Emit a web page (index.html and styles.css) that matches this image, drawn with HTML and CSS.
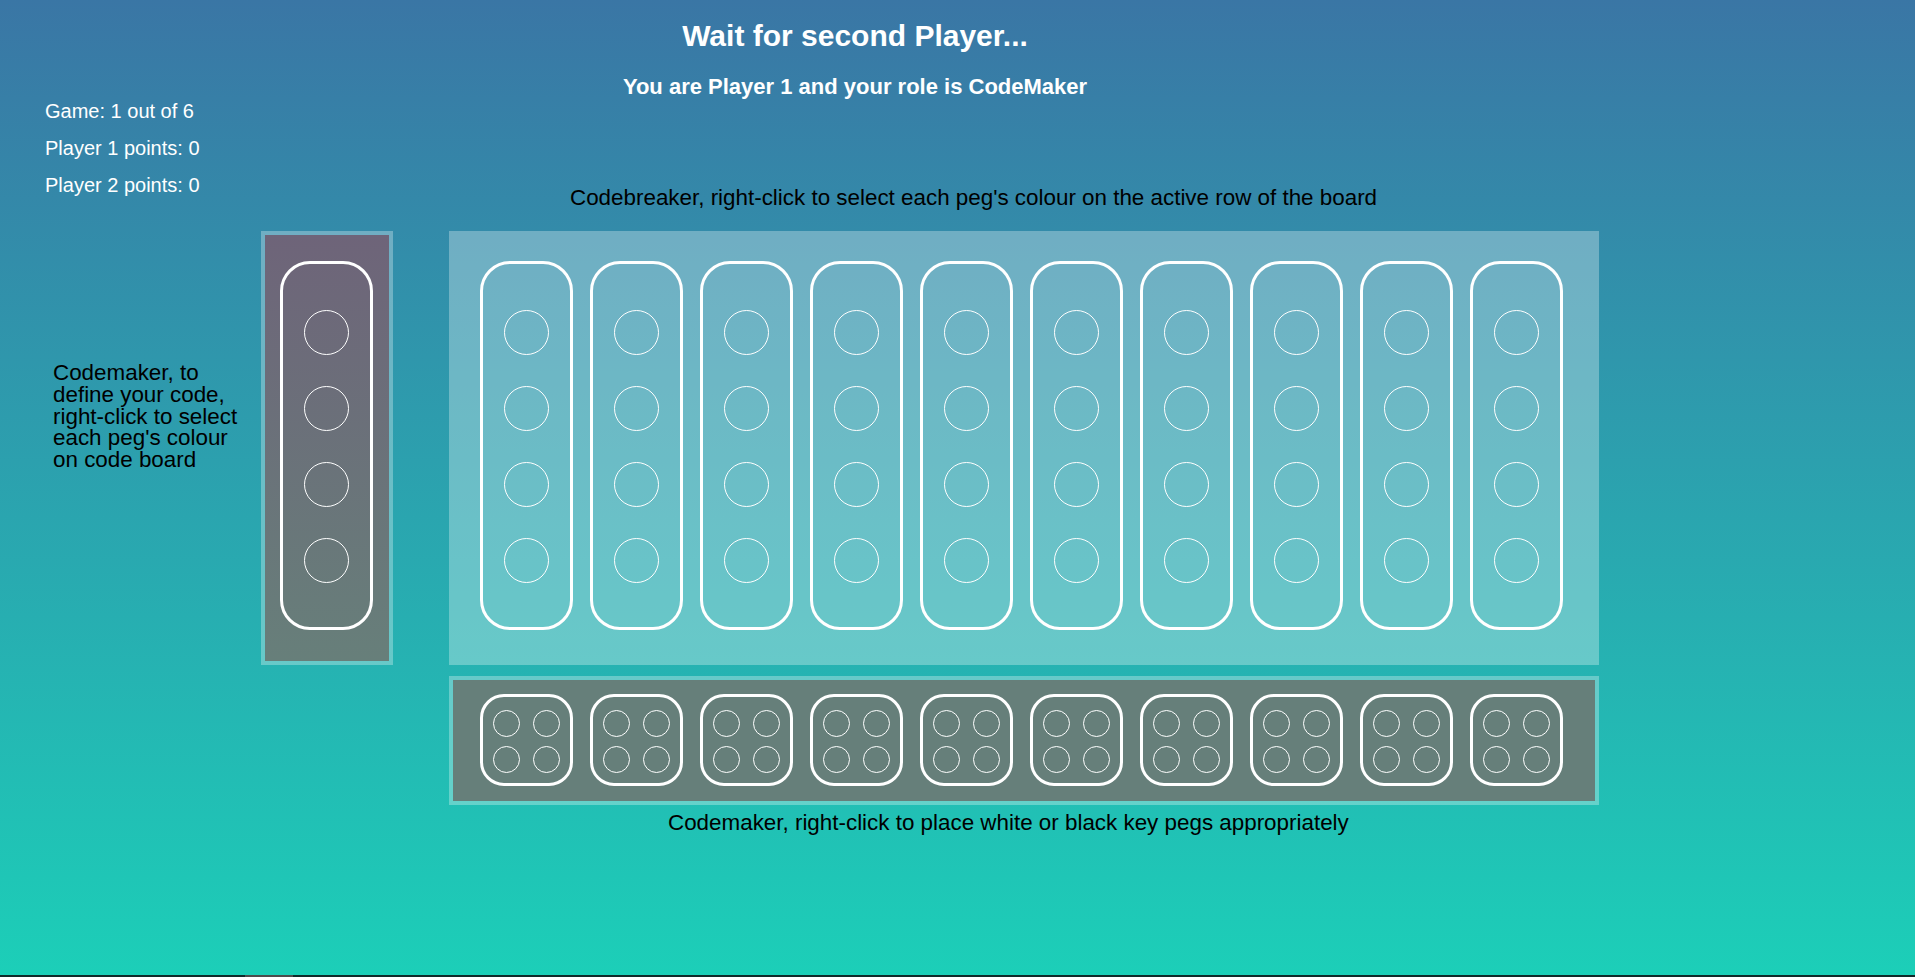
FILE: index.html
```html
<!DOCTYPE html>
<html lang="en">
<head>
<meta charset="utf-8">
<title>Mastermind</title>
<link rel="stylesheet" href="styles.css">
</head>
<body>
<div class="page">
  <header class="header">
    <h1 class="title">Wait for second Player...</h1>
    <h2 class="subtitle">You are Player 1 and your role is CodeMaker</h2>
  </header>

  <main class="game">
    <div class="stats">
      <p>Game: 1 out of 6</p>
      <p>Player 1 points: 0</p>
      <p>Player 2 points: 0</p>
    </div>

    <p class="label label-top">Codebreaker, right-click to select each peg's colour on the active row of the board</p>

    <p class="note">Codemaker, to define your code, right-click to select each peg's colour on code board</p>

    <div class="codeboard">
      <div class="pill"><span class="peg"></span><span class="peg"></span><span class="peg"></span><span class="peg"></span></div>
    </div>

    <div class="board">
      <div class="pill"><span class="peg"></span><span class="peg"></span><span class="peg"></span><span class="peg"></span></div>
      <div class="pill"><span class="peg"></span><span class="peg"></span><span class="peg"></span><span class="peg"></span></div>
      <div class="pill"><span class="peg"></span><span class="peg"></span><span class="peg"></span><span class="peg"></span></div>
      <div class="pill"><span class="peg"></span><span class="peg"></span><span class="peg"></span><span class="peg"></span></div>
      <div class="pill"><span class="peg"></span><span class="peg"></span><span class="peg"></span><span class="peg"></span></div>
      <div class="pill"><span class="peg"></span><span class="peg"></span><span class="peg"></span><span class="peg"></span></div>
      <div class="pill"><span class="peg"></span><span class="peg"></span><span class="peg"></span><span class="peg"></span></div>
      <div class="pill"><span class="peg"></span><span class="peg"></span><span class="peg"></span><span class="peg"></span></div>
      <div class="pill"><span class="peg"></span><span class="peg"></span><span class="peg"></span><span class="peg"></span></div>
      <div class="pill"><span class="peg"></span><span class="peg"></span><span class="peg"></span><span class="peg"></span></div>
    </div>

    <div class="keyboard">
      <div class="keybox"><span class="kpeg"></span><span class="kpeg"></span><span class="kpeg"></span><span class="kpeg"></span></div>
      <div class="keybox"><span class="kpeg"></span><span class="kpeg"></span><span class="kpeg"></span><span class="kpeg"></span></div>
      <div class="keybox"><span class="kpeg"></span><span class="kpeg"></span><span class="kpeg"></span><span class="kpeg"></span></div>
      <div class="keybox"><span class="kpeg"></span><span class="kpeg"></span><span class="kpeg"></span><span class="kpeg"></span></div>
      <div class="keybox"><span class="kpeg"></span><span class="kpeg"></span><span class="kpeg"></span><span class="kpeg"></span></div>
      <div class="keybox"><span class="kpeg"></span><span class="kpeg"></span><span class="kpeg"></span><span class="kpeg"></span></div>
      <div class="keybox"><span class="kpeg"></span><span class="kpeg"></span><span class="kpeg"></span><span class="kpeg"></span></div>
      <div class="keybox"><span class="kpeg"></span><span class="kpeg"></span><span class="kpeg"></span><span class="kpeg"></span></div>
      <div class="keybox"><span class="kpeg"></span><span class="kpeg"></span><span class="kpeg"></span><span class="kpeg"></span></div>
      <div class="keybox"><span class="kpeg"></span><span class="kpeg"></span><span class="kpeg"></span><span class="kpeg"></span></div>
    </div>

    <p class="label label-bottom">Codemaker, right-click to place white or black key pegs appropriately</p>
  </main>
</div>
<div class="scrollbar"><span class="thumb"></span></div>
</body>
</html>
```

FILE: styles.css
```css
html, body {
  margin: 0;
  padding: 0;
}

body {
  width: 1915px;
  height: 977px;
  overflow: hidden;
  display: flex;
  flex-direction: column;
  font-family: "Liberation Sans", Arial, sans-serif;
  color: #000;
  background: linear-gradient(to bottom, #3a76a5 0%, #1ccfb8 100%);
}

.page {
  flex: 1;
}

.header {
  width: 1710px;
  height: 100px;
  text-align: center;
  color: #fff;
}

.title {
  margin: 0;
  padding-top: 19px;
  font-size: 30px;
  font-weight: bold;
  line-height: 34.5px;
}

.subtitle {
  margin: 20px 0 0;
  font-size: 22px;
  font-weight: bold;
  line-height: 25px;
}

.game {
  display: grid;
  grid-template-columns: 261px 188px 1150px;
  grid-template-rows: 131px auto auto auto;
}

.stats {
  grid-column: 1;
  grid-row: 1;
  padding-left: 45px;
  color: #fff;
  font-size: 20px;
  line-height: 23px;
}

.stats p {
  margin: 0 0 14px;
  white-space: nowrap;
}

.label {
  margin: 0;
  font-size: 22.4px;
  line-height: 25.75px;
  white-space: nowrap;
}

.label-top {
  grid-column: 3;
  grid-row: 1;
  align-self: end;
  padding-left: 121px;
  margin-bottom: 20px;
}

.label-bottom {
  grid-column: 3;
  grid-row: 4;
  padding-left: 219px;
  margin-top: 5px;
}

.note {
  grid-column: 1;
  grid-row: 2;
  margin: 131px 0 0 53px;
  width: 195px;
  font-size: 22.4px;
  line-height: 21.75px;
}

.codeboard {
  grid-column: 2;
  grid-row: 2;
  width: 132px;
  height: 434px;
  box-sizing: border-box;
  padding: 26px 16px 31px 15px;
  border: 4px solid rgba(255, 255, 255, 0.3);
  background: linear-gradient(to bottom, #6e6479 0%, #677f7a 100%) padding-box;
}

.board {
  grid-column: 3;
  grid-row: 2;
  height: 434px;
  box-sizing: border-box;
  padding: 30px 0 0 31px;
  display: flex;
  align-items: flex-start;
  gap: 17px;
  background: rgba(255, 255, 255, 0.3);
}

.pill {
  width: 93px;
  height: 369px;
  box-sizing: border-box;
  border: 3px solid #fff;
  border-radius: 30px;
  display: flex;
  flex-direction: column;
  align-items: center;
  justify-content: center;
  gap: 31px;
  padding-top: 1px;
}

.peg {
  display: block;
  width: 45px;
  height: 45px;
  box-sizing: border-box;
  border: 1px solid #fff;
  border-radius: 50%;
}

.keyboard {
  grid-column: 3;
  grid-row: 3;
  margin-top: 11px;
  height: 129px;
  box-sizing: border-box;
  padding: 14px 0 0 27px;
  border: 4px solid rgba(255, 255, 255, 0.3);
  background: #667f7a padding-box;
  display: flex;
  align-items: flex-start;
  gap: 17px;
}

.keybox {
  width: 93px;
  height: 92px;
  box-sizing: border-box;
  border: 3px solid #fff;
  border-radius: 24px;
  display: grid;
  grid-template-columns: 27px 27px;
  grid-template-rows: 27px 27px;
  column-gap: 13px;
  row-gap: 9px;
  align-content: center;
  justify-content: center;
  padding-top: 3px;
}

.kpeg {
  display: block;
  width: 27px;
  height: 27px;
  box-sizing: border-box;
  border: 1px solid #fff;
  border-radius: 50%;
}

.scrollbar {
  height: 2px;
  background: #102a2a;
  display: flex;
}

.thumb {
  margin-left: 245px;
  width: 48px;
  height: 2px;
  background: #4c4c4c;
}
```
